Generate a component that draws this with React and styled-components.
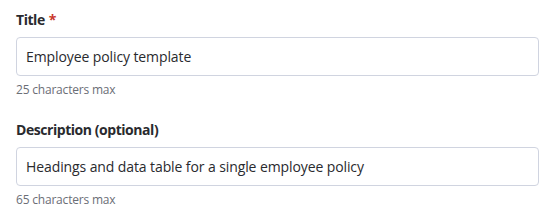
import styled, { createGlobalStyle } from 'styled-components';

const GlobalStyle = createGlobalStyle`
  body {
    margin: 0;
    background: #fff;
    font-family: "Open Sans", "Noto Sans", sans-serif;
  }
`;

const Form = styled.div`
  display: flex;
  flex-direction: column;
  gap: 22px;
  padding: 10px 18px 0 16px;
`;

const Field = styled.div`
  display: flex;
  flex-direction: column;
`;

const Label = styled.label`
  font-size: 14px;
  font-weight: 700;
  line-height: 20px;
  letter-spacing: -0.45px;
  color: #292a2e;
  margin-bottom: 7px;
`;

const Required = styled.span`
  color: #c9372c;
  margin-left: 4px;
`;

const Input = styled.input`
  box-sizing: border-box;
  height: 39px;
  width: 100%;
  padding: 0 9px;
  border: 1px solid #d0d4e0;
  border-radius: 4px;
  font-family: inherit;
  font-size: 14px;
  letter-spacing: -0.1px;
  color: #292a2e;
  outline: none;
  background: #fff;
`;

const Helper = styled.div`
  font-size: 12px;
  line-height: 16px;
  letter-spacing: -0.2px;
  color: #6b6e76;
  margin-top: 6px;
`;

const App = () => {
  return (
    <>
      <GlobalStyle />
      <Form>
        <Field>
          <Label>
            Title<Required>*</Required>
          </Label>
          <Input defaultValue="Employee policy template" />
          <Helper>25 characters max</Helper>
        </Field>
        <Field>
          <Label>Description (optional)</Label>
          <Input defaultValue="Headings and data table for a single employee policy" />
          <Helper>65 characters max</Helper>
        </Field>
      </Form>
    </>
  );
};

export default App;
